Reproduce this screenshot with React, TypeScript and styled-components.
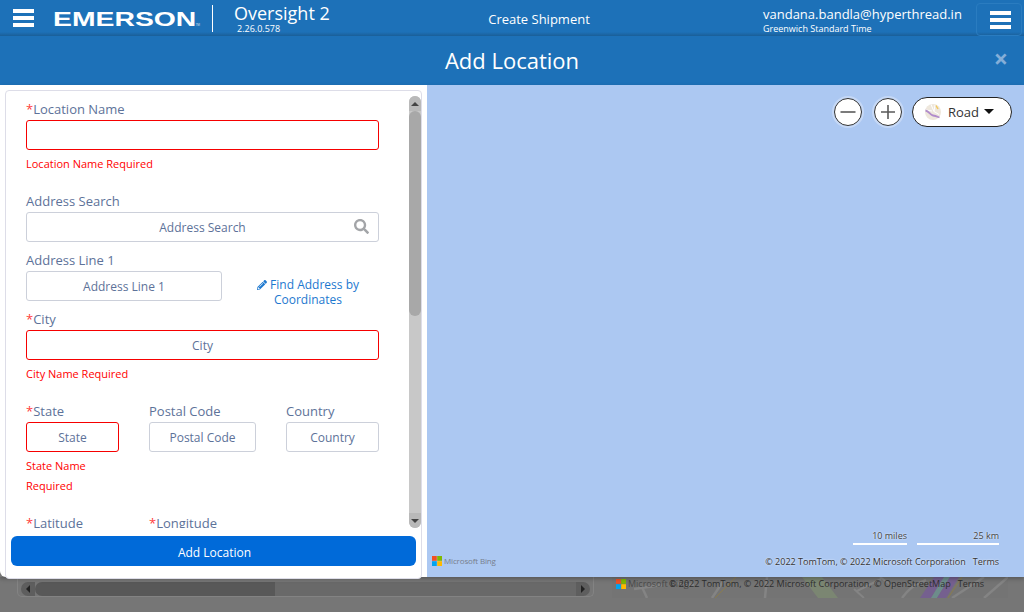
import styled, { createGlobalStyle } from 'styled-components';
import { FaSearch, FaPencilAlt } from 'react-icons/fa';

const GlobalStyle = createGlobalStyle`
  html, body {
    margin: 0;
    padding: 0;
    background: #767676;
  }
  * {
    box-sizing: border-box;
  }
`;

const Hamburger = () => (
  <Bars>
    <span />
    <span />
    <span />
  </Bars>
);

const MsLogo = () => (
  <svg width="10" height="10" viewBox="0 0 10 10">
    <rect width="4.8" height="4.8" fill="#f25022" />
    <rect x="5.2" width="4.8" height="4.8" fill="#7fba00" />
    <rect y="5.2" width="4.8" height="4.8" fill="#00a4ef" />
    <rect x="5.2" y="5.2" width="4.8" height="4.8" fill="#ffb900" />
  </svg>
);

const App = () => {
  return (
    <Page>
      <GlobalStyle />
      <TopBar>
        <Hamburger />
        <LogoBox>
          <Logo>EMERSON</Logo>
          <Tm>TM</Tm>
        </LogoBox>
        <Divider />
        <AppName>
          <p className="name">Oversight 2</p>
          <p className="version">2.26.0.578</p>
        </AppName>
        <PageName>Create Shipment</PageName>
        <UserBox>
          <p className="email">vandana.bandla@hyperthread.in</p>
          <p className="zone">Greenwich Standard Time</p>
        </UserBox>
        <MenuButton>
          <Hamburger />
        </MenuButton>
      </TopBar>
      <ModalHeader>
        <ModalTitle>Add Location</ModalTitle>
        <CloseButton>×</CloseButton>
      </ModalHeader>
      <ModalBody>
        <LeftPanel>
          <Card>
            <ScrollArea>
              <Form>
                <Label>
                  <em>*</em>Location Name
                </Label>
                <Input $error />
                <ErrorText>Location Name Required</ErrorText>
                <Label>Address Search</Label>
                <SearchBox>
                  <Input placeholder="Address Search" />
                  <SearchIcon>
                    <FaSearch />
                  </SearchIcon>
                </SearchBox>
                <Label>Address Line 1</Label>
                <AddressRow>
                  <Input placeholder="Address Line 1" />
                  <FindLink>
                    <FaPencilAlt /> Find Address by Coordinates
                  </FindLink>
                </AddressRow>
                <Label>
                  <em>*</em>City
                </Label>
                <Input $error placeholder="City" />
                <ErrorText>City Name Required</ErrorText>
                <ThreeCols>
                  <div>
                    <Label>
                      <em>*</em>State
                    </Label>
                    <Input $error placeholder="State" />
                    <ErrorText>State Name Required</ErrorText>
                  </div>
                  <div>
                    <Label>Postal Code</Label>
                    <Input placeholder="Postal Code" />
                  </div>
                  <div>
                    <Label>Country</Label>
                    <Input placeholder="Country" />
                  </div>
                </ThreeCols>
                <ThreeCols>
                  <div>
                    <Label>
                      <em>*</em>Latitude
                    </Label>
                    <Input $error placeholder="Latitude" />
                  </div>
                  <div>
                    <Label>
                      <em>*</em>Longitude
                    </Label>
                    <Input $error placeholder="Longitude" />
                  </div>
                </ThreeCols>
              </Form>
              <Scrollbar>
                <ScrollArrow $dir="up" />
                <ScrollThumb />
                <ScrollTrack />
                <ScrollArrow $dir="down" />
              </Scrollbar>
            </ScrollArea>
            <AddButton>Add Location</AddButton>
          </Card>
        </LeftPanel>
        <MapPane>
          <MapControls>
            <RoundButton>
              <svg width="18" height="18" viewBox="0 0 18 18">
                <path d="M1.5 9h15" stroke="#5a5a5a" strokeWidth="1.6" />
              </svg>
            </RoundButton>
            <RoundButton>
              <svg width="18" height="18" viewBox="0 0 18 18">
                <path d="M2 9h14M9 2v14" stroke="#5a5a5a" strokeWidth="1.6" />
              </svg>
            </RoundButton>
            <RoadButton>
              <svg width="16" height="16" viewBox="0 0 16 16">
                <circle cx="8" cy="8" r="8" fill="#eee7dc" />
                <path d="M6 .5l3 7 5 3M1 6l6 1M10 1L9 7.500" stroke="#fff" strokeWidth="1" fill="none" />
                <path d="M11 1.500L13 5" stroke="#f2c75c" strokeWidth="1.500" fill="none" />
                <path d="M.5 6.500C4 7 5 11 8 11.500s5 1.500 6.500 2" stroke="#b18ccb" strokeWidth="1.800" fill="none" />
              </svg>
              <span>Road</span>
              <Caret />
            </RoadButton>
          </MapControls>
          <ScaleBars>
            <ScaleItem $width={54}>10 miles</ScaleItem>
            <ScaleItem $width={82}>25 km</ScaleItem>
          </ScaleBars>
          <BingMark>
            <MsLogo />
            <span>Microsoft Bing</span>
          </BingMark>
          <MapCopyright>
            <span>© 2022 TomTom, © 2022 Microsoft Corporation</span>
            <span>Terms</span>
          </MapCopyright>
        </MapPane>
      </ModalBody>
      <Backdrop>
        <PageScroll>
          <PageArrow $dir="left" />
          <PageThumb />
          <PageArrow $dir="right" />
        </PageScroll>
        <BehindMap>
          <svg width="396" height="21" viewBox="0 0 396 21">
            <g fill="none">
              <path d="M22 12l28-4M30 10l5 11M62 6l20 2M100 21l12-18" stroke="#848484" strokeWidth="2.500" />
              <path d="M103 21L124 0" stroke="#8a7c4e" strokeWidth="1" />
              <path d="M155 0l-2 21" stroke="#848484" strokeWidth="2.500" />
              <path d="M190 0h20l16 21h-20z" fill="#7b8672" />
              <path d="M245 14l24-12M252 21l-10-9M268 0l14 10" stroke="#848484" strokeWidth="2" />
              <path d="M290 21c6-8 12-14 24-18M340 21L372 0M372 21L396 0" stroke="#848484" strokeWidth="2.500" />
              <path d="M308 21L322 0h10l-13 21z" fill="#75608f" />
              <path d="M319 21L332 0h6l-13 21z" fill="#6d8c8b" />
              <path d="M325 21L338 0h9l-13 21z" fill="#75608f" />
              <path d="M336 21L350 0" stroke="#8a7c4e" strokeWidth="1" />
            </g>
          </svg>
          <BehindBing>
            <MsLogo />
            <span>Microsoft Bing</span>
          </BehindBing>
          <BehindCopyright>
            <span>© 2022 TomTom, © 2022 Microsoft Corporation, © OpenStreetMap</span>
            <span>Terms</span>
          </BehindCopyright>
        </BehindMap>
      </Backdrop>
    </Page>
  );
};

const Page = styled.div`
  width: 1024px;
  height: 612px;
  overflow: hidden;
  display: flex;
  flex-direction: column;
  background: #767676;
  font-family: 'Open Sans', 'Liberation Sans', sans-serif;
`;
const TopBar = styled.header`
  height: 36px;
  flex: none;
  display: flex;
  align-items: center;
  padding-left: 13px;
  background: linear-gradient(#1d71b8 0, #1d71b8 32px, #1a5f98 36px);
  color: #ffffff;
  p {
    margin: 0;
    white-space: nowrap;
  }
`;
const Bars = styled.div`
  width: 21px;
  display: flex;
  flex-direction: column;
  gap: 3px;
  flex: none;
  span {
    display: block;
    height: 4px;
    background: #ffffff;
  }
`;
const LogoBox = styled.div`
  width: 147px;
  margin-left: 19px;
  margin-top: 1px;
  display: flex;
  align-items: flex-end;
  flex: none;
`;
const Logo = styled.span`
  display: inline-block;
  width: 143px;
  font-family: 'Liberation Sans', sans-serif;
  font-size: 21px;
  line-height: 20px;
  font-weight: 700;
  white-space: nowrap;
  transform: scaleX(1.35);
  transform-origin: left center;
`;
const Tm = styled.span`
  font-size: 3px;
  line-height: 8px;
  opacity: 0.8;
`;
const Divider = styled.div`
  width: 1px;
  height: 27px;
  margin-left: 12px;
  background: #ffffff;
  flex: none;
`;
const AppName = styled.div`
  width: 220px;
  margin-left: 21px;
  flex: none;
  .name {
    font-size: 18px;
    line-height: 20px;
    margin-top: 1px;
  }
  .version {
    font-size: 9px;
    line-height: 11px;
    margin-left: 3px;
  }
`;
const PageName = styled.div`
  width: 170px;
  font-size: 13px;
  text-align: center;
  flex: none;
  margin-top: 2px;
`;
const UserBox = styled.div`
  margin-left: 139px;
  width: 213px;
  flex: none;
  .email {
    font-size: 13px;
    line-height: 18px;
    margin-top: 3px;
  }
  .zone {
    font-size: 9px;
    line-height: 12px;
  }
`;
const MenuButton = styled.div`
  width: 46px;
  height: 33px;
  margin-top: 3px;
  padding-left: 2px;
  flex: none;
  display: flex;
  align-items: center;
  justify-content: center;
  border: 1px solid #2a7cc0;
  border-radius: 4px;
`;
const ModalHeader = styled.div`
  height: 49px;
  flex: none;
  display: flex;
  align-items: center;
  justify-content: center;
  position: relative;
  background: #1d71b8;
`;
const ModalTitle = styled.h1`
  margin: 0;
  color: #ffffff;
  font-size: 22px;
  font-weight: 400;
  line-height: 49px;
`;
const CloseButton = styled.span`
  position: absolute;
  top: 4px;
  right: 16px;
  color: #84aed8;
  font-size: 25px;
  font-weight: 700;
  line-height: 36px;
`;
const ModalBody = styled.div`
  height: 492px;
  flex: none;
  display: flex;
  position: relative;
  z-index: 1;
  box-shadow: 0 2px 4px rgba(0, 0, 0, 0.25);
`;
const LeftPanel = styled.div`
  width: 427px;
  flex: none;
  padding: 5px 5px 0;
  background: #ffffff;
  border-bottom-left-radius: 6px;
`;
const Card = styled.div`
  width: 417px;
  height: 489px;
  display: flex;
  flex-direction: column;
  background: #ffffff;
  border: 1px solid #dddde8;
  border-radius: 4px;
  padding-top: 5px;
`;
const ScrollArea = styled.div`
  height: 432px;
  flex: none;
  display: flex;
`;
const Form = styled.div`
  width: 403px;
  height: 100%;
  overflow: hidden;
  padding: 4px 29px 0 20px;
`;
const Label = styled.label`
  display: block;
  height: 20px;
  font-size: 13px;
  line-height: 18px;
  color: #5d7299;
  white-space: nowrap;
  em {
    font-style: normal;
    color: #ff3b3b;
  }
`;
const Input = styled.input<{ $error?: boolean }>`
  display: block;
  width: 100%;
  height: 30px;
  padding: 0 6px;
  margin-bottom: 9px;
  font-family: inherit;
  font-size: 12px;
  text-align: center;
  background: #ffffff;
  border: 1px solid ${(p) => (p.$error ? '#f60000' : '#ccd0da')};
  border-radius: 3px;
  outline: none;
  &::placeholder {
    color: #5d7299;
    opacity: 1;
  }
`;
const ErrorText = styled.div`
  margin: -5px 0 18px;
  font-size: 11px;
  line-height: 20px;
  color: #ff0000;
`;
const SearchBox = styled.div`
  position: relative;
`;
const SearchIcon = styled.span`
  position: absolute;
  top: 7px;
  right: 10px;
  font-size: 15px;
  line-height: 15px;
  color: #a3a5a8;
`;
const AddressRow = styled.div`
  display: grid;
  grid-template-columns: 196px 140px;
  column-gap: 16px;
`;
const FindLink = styled.div`
  padding-top: 6px;
  font-size: 12px;
  line-height: 15px;
  text-align: center;
  color: #1d78cf;
  svg {
    font-size: 10px;
    vertical-align: -1px;
  }
`;
const ThreeCols = styled.div`
  display: grid;
  grid-template-columns: 93px 107px 93px;
  column-gap: 30px;
`;
const Scrollbar = styled.div`
  width: 12px;
  flex: none;
  margin-left: 1px;
  display: flex;
  flex-direction: column;
  border-radius: 6px;
  overflow: hidden;
  background: #c8c8c8;
`;
const ScrollArrow = styled.div<{ $dir: 'up' | 'down' }>`
  height: 15px;
  flex: none;
  display: flex;
  align-items: center;
  justify-content: center;
  background: #b9b9b9;
  &::before {
    content: '';
    border-left: 4px solid transparent;
    border-right: 4px solid transparent;
    ${(p) => (p.$dir === 'up' ? 'border-bottom: 4px solid #444;' : 'border-top: 4px solid #444;')}
  }
`;
const ScrollThumb = styled.div`
  height: 205px;
  flex: none;
  background: #a8a8a8;
  border-radius: 6px;
`;
const ScrollTrack = styled.div`
  flex: 1;
`;
const AddButton = styled.button`
  width: 405px;
  height: 30px;
  margin: 8px 0 0 5px;
  padding: 2px 0 0 2px;
  flex: none;
  font-family: inherit;
  font-size: 12px;
  color: #ffffff;
  background: #006ad9;
  border: none;
  border-radius: 6px;
`;
const MapPane = styled.div`
  flex: 1;
  position: relative;
  background: #acc8f2;
`;
const MapControls = styled.div`
  position: absolute;
  top: 12px;
  right: 12px;
  display: flex;
  align-items: center;
  gap: 12px;
`;
const RoundButton = styled.div`
  width: 28px;
  height: 28px;
  display: flex;
  align-items: center;
  justify-content: center;
  background: #ffffff;
  border: 1px solid #333;
  border-radius: 50%;
  box-shadow: 0 0 0 2px #c5d8f6;
`;
const RoadButton = styled.div`
  width: 100px;
  height: 30px;
  display: flex;
  align-items: center;
  padding-left: 12px;
  margin-left: -2px;
  background: #ffffff;
  border: 1px solid #222;
  border-radius: 15px;
  font-size: 13px;
  color: #333;
  span {
    margin-left: 7px;
  }
`;
const Caret = styled.i`
  margin-left: 5px;
  margin-top: -2px;
  border-left: 5px solid transparent;
  border-right: 5px solid transparent;
  border-top: 5px solid #111;
`;
const ScaleBars = styled.div`
  position: absolute;
  right: 25px;
  bottom: 32px;
  display: flex;
  gap: 10px;
`;
const ScaleItem = styled.div<{ $width: number }>`
  width: ${(p) => p.$width}px;
  height: 15px;
  text-align: right;
  font-size: 9px;
  line-height: 11px;
  color: #444;
  text-shadow: 0 0 2px #fff;
  border-bottom: 2px solid #ffffff;
`;
const BingMark = styled.div`
  position: absolute;
  left: 5px;
  bottom: 11px;
  display: flex;
  align-items: center;
  gap: 2px;
  font-size: 8px;
  letter-spacing: -0.15px;
  color: #777e8c;
`;
const MapCopyright = styled.div`
  position: absolute;
  right: 25px;
  bottom: 8px;
  display: flex;
  gap: 7px;
  font-size: 9px;
  line-height: 14px;
  color: #333;
  text-shadow: 0 0 2px #fff;
`;
const Backdrop = styled.div`
  height: 35px;
  flex: none;
  display: flex;
  align-items: flex-start;
  background: #767676;
`;
const PageScroll = styled.div`
  width: 577px;
  height: 20px;
  margin-left: 17px;
  flex: none;
  display: flex;
  padding: 5px 3px 0;
  background: #767676;
  border: 1px solid #838383;
  border-top: none;
  border-radius: 0 0 5px 5px;
`;
const PageArrow = styled.div<{ $dir: 'left' | 'right' }>`
  width: 14px;
  height: 14px;
  flex: none;
  display: flex;
  align-items: center;
  justify-content: center;
  background: #5e5e5e;
  border-radius: ${(p) => (p.$dir === 'left' ? '7px 0 0 7px' : '0 7px 7px 0')};
  &::before {
    content: '';
    border-top: 4px solid transparent;
    border-bottom: 4px solid transparent;
    ${(p) => (p.$dir === 'left' ? 'border-right: 4px solid #222;' : 'border-left: 4px solid #222;')}
  }
`;
const PageThumb = styled.div`
  flex: 1;
  height: 14px;
  background: linear-gradient(90deg, #585858 0, #585858 240px, #696969 240px);
  border-radius: 7px 0 0 7px;
`;
const BehindMap = styled.div`
  width: 396px;
  height: 21px;
  margin-left: 18px;
  flex: none;
  position: relative;
  background: #747474;
  svg {
    display: block;
  }
`;
const BehindBing = styled.div`
  position: absolute;
  top: 0;
  left: 4px;
  display: flex;
  align-items: center;
  gap: 2px;
  font-size: 9px;
  color: #4a4a4a;
`;
const BehindCopyright = styled.div`
  position: absolute;
  top: 0;
  left: 57px;
  display: flex;
  gap: 7px;
  font-size: 9px;
  line-height: 14px;
  color: #2e2e2e;
  white-space: nowrap;
`;

export default App;
